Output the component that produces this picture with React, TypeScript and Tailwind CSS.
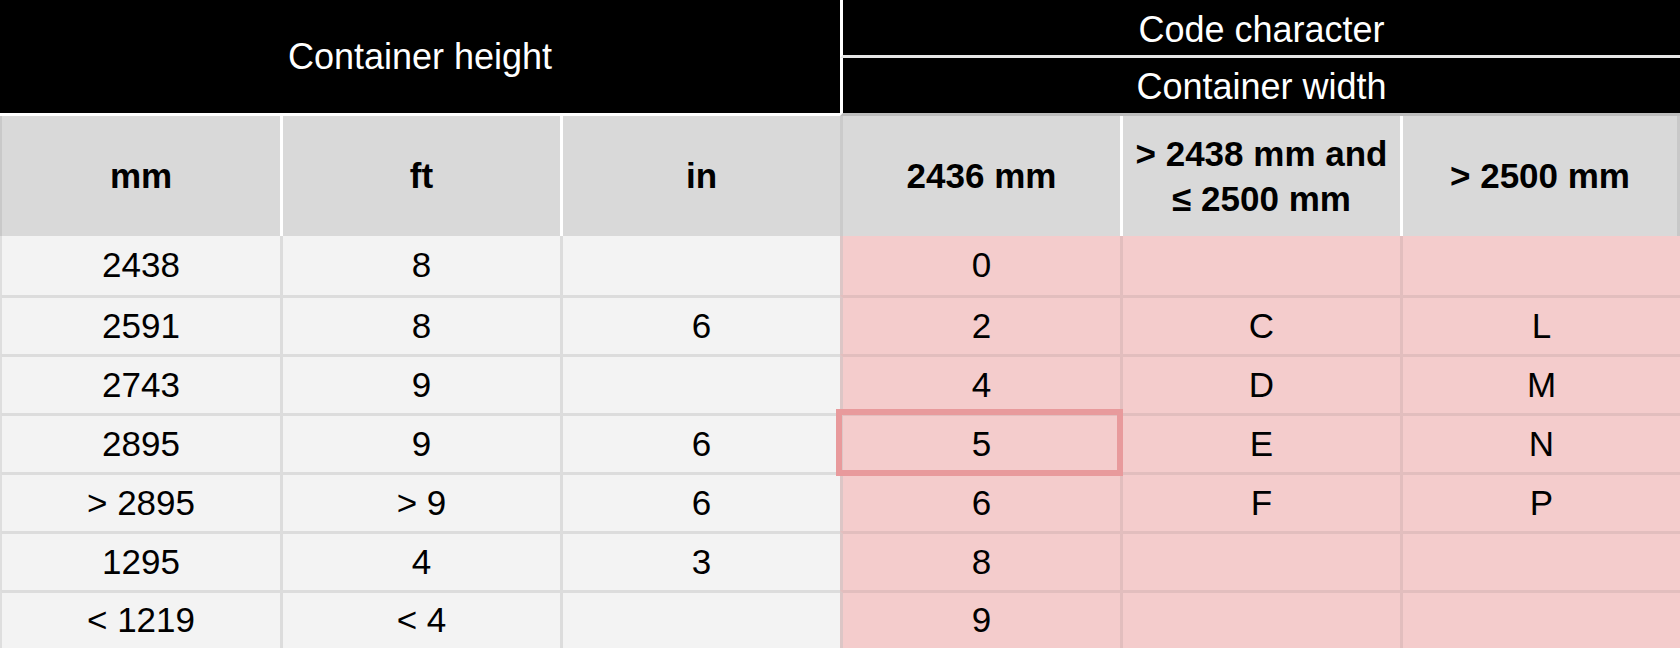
const rows = [
  ['2438', '8', '', '0', '', ''],
  ['2591', '8', '6', '2', 'C', 'L'],
  ['2743', '9', '', '4', 'D', 'M'],
  ['2895', '9', '6', '5', 'E', 'N'],
  ['> 2895', '> 9', '6', '6', 'F', 'P'],
  ['1295', '4', '3', '8', '', ''],
  ['< 1219', '< 4', '', '9', '', ''],
];

const units = ['mm', 'ft', 'in', '2436 mm', '', '> 2500 mm'];

// border + background for each data cell, by column and row
const dataCell = (col: number, row: number) => {
  const pink = col >= 3;
  const base = pink ? 'bg-[#f4cccc]' : 'bg-[#f3f3f3]';
  const top = row > 0 ? (pink ? 'border-t-[3px] border-t-[#e2bebe]' : 'border-t-[3px] border-t-[#dcdcdc]') : '';
  let left = '';
  if (col === 0) left = 'border-l-2 border-l-[#dedede]';
  else if (col === 3) left = 'border-l-[3px] border-l-[#dcc6c6]';
  else if (pink) left = 'border-l-[3px] border-l-[#e2bebe]';
  else left = 'border-l-[3px] border-l-[#dcdcdc]';
  return `${base} ${top} ${left}`;
};

const headCell = (col: number) => {
  if (col === 0) return 'border-l-2 border-l-[#c9c9c9]';
  if (col === 3) return 'border-l-[3px] border-l-[#cbcbcb]';
  if (col === 5) return 'border-l-[3px] border-l-white border-r-[3px] border-r-[#c8c8c8]';
  return 'border-l-[3px] border-l-white';
};

const App = () => {
  return (
    <div className="w-[1680px] h-[648px] bg-white font-['Liberation_Sans',Arial,sans-serif] text-[35px] text-black overflow-hidden">
      <div className="grid grid-cols-6 grid-rows-[58px_58px_120px_repeat(6,59px)_58px]">
        {/* black title cells */}
        <div className="col-span-3 row-span-2 bg-black text-white text-[36px] flex items-center justify-center border-b-[3px] border-b-white">
          Container height
        </div>
        <div className="col-span-3 bg-black text-white text-[36px] pt-[4px] flex items-center justify-center border-l-[3px] border-l-white border-b-[3px] border-b-[#e6e6e6]">
          Code character
        </div>
        <div className="col-span-3 bg-black text-white text-[36px] pt-[3px] flex items-center justify-center border-l-[3px] border-l-white border-b-[3px] border-b-[#bdbdbd]">
          Container width
        </div>

        {/* unit header */}
        {units.map((u, i) => (
          <div
            key={i}
            className={`bg-[#d9d9d9] font-bold flex items-center justify-center text-center ${headCell(i)}`}
          >
            {i === 4 ? (
              <span className="leading-[45px]">
                &gt; 2438 mm and
                <br />≤ 2500 mm
              </span>
            ) : (
              u
            )}
          </div>
        ))}

        {/* data */}
        {rows.map((r, ri) =>
          r.map((v, ci) => (
            <div
              key={`${ri}-${ci}`}
              className={`relative flex items-center justify-center ${dataCell(ci, ri)}`}
            >
              {v}
              {ri === 3 && ci === 3 && (
                <div className="absolute -left-[7px] -top-[7px] -right-[3px] -bottom-[4px] border-[6px] border-[#e89a9c] z-10 pointer-events-none" />
              )}
            </div>
          ))
        )}
      </div>
    </div>
  );
};

export default App;
